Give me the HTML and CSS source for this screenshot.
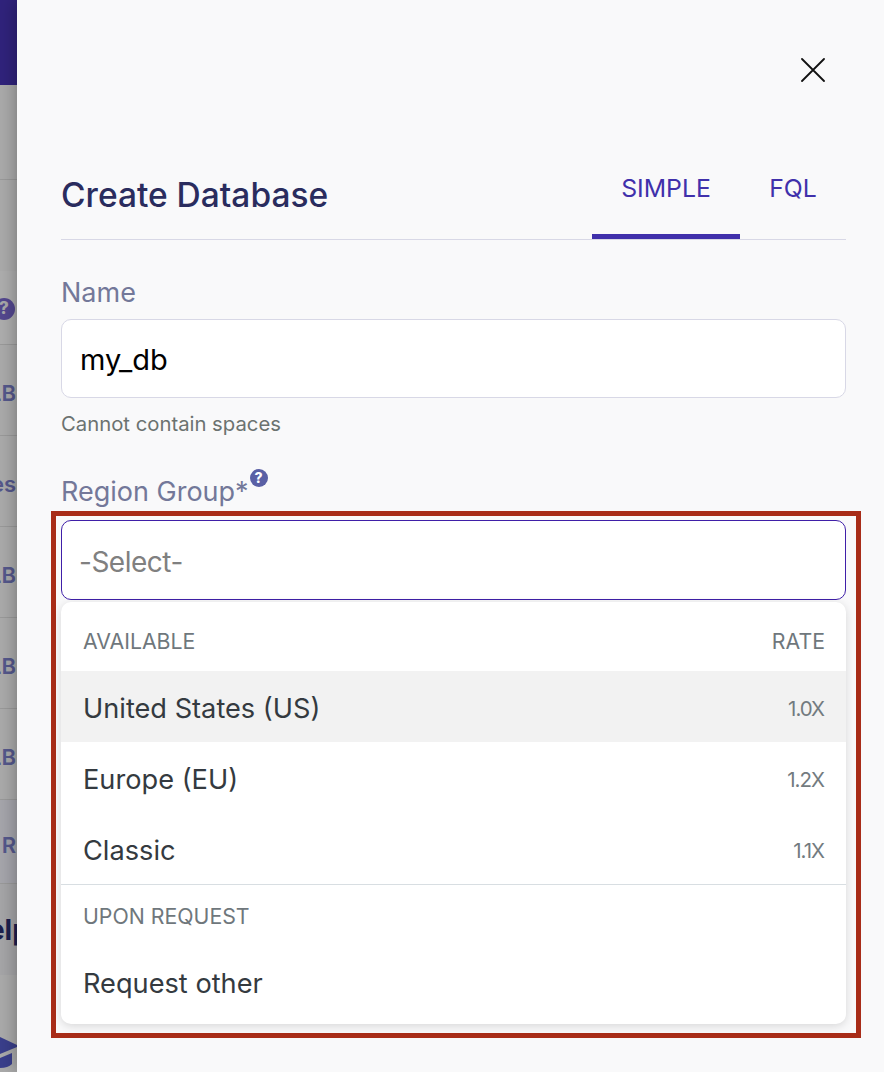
FILE: index.html
```html
<!DOCTYPE html>
<html lang="en">
<head>
    <meta charset="UTF-8">
    <meta name="viewport" content="width=device-width, initial-scale=1.0">
    <title>Create Database</title>
    <link rel="stylesheet" href="styles.css">
</head>
<body>
    <div class="page">
        <!-- what is left visible of the page behind the drawer -->
        <div class="behind">
            <div class="behind-top"></div>
            <div class="behind-row h95"></div>
            <div class="behind-row h91 no-line"></div>
            <div class="behind-row h74 lighter"><span class="help-icon big">?</span></div>
            <div class="behind-row h91"><span>LB</span></div>
            <div class="behind-row h91"><span>es</span></div>
            <div class="behind-row h91"><span>LB</span></div>
            <div class="behind-row h91"><span>LB</span></div>
            <div class="behind-row h91"><span>LB</span></div>
            <div class="behind-row h84 bluish"><span>R</span></div>
            <div class="behind-row h91 no-line help-row"><span>Help</span></div>
            <div class="behind-cap">
                <svg width="17" height="31" viewBox="0 0 17 31">
                    <path d="M0 0 L17 8 L17 10 L0 17 Z" fill="#3a3f8c"/>
                    <path d="M0 21 L12 16 L12 27 Q8 31 0 31 Z" fill="#3a3f8c"/>
                </svg>
            </div>
        </div>

        <div class="drawer">
            <button class="close" aria-label="Close">
                <svg width="24" height="24" viewBox="0 0 24 24">
                    <path d="M1 1 L23 23 M23 1 L1 23" stroke="#111" stroke-width="1.8" stroke-linecap="round"/>
                </svg>
            </button>

            <div class="header">
                <h1>Create Database</h1>
                <div class="tabs">
                    <div class="tab active">SIMPLE</div>
                    <div class="tab">FQL</div>
                </div>
            </div>

            <label class="label name-label">Name</label>
            <div class="input">my_db</div>
            <p class="hint">Cannot contain spaces</p>

            <label class="label region-label"><span>Region Group*</span><span class="help-icon">?</span></label>

            <div class="highlight">
                <div class="select">-Select-</div>
                <div class="dropdown">
                    <div class="group-head first"><span>AVAILABLE</span><span>RATE</span></div>
                    <div class="option region hover"><span>United States (US)</span><span class="rate">1.0X</span></div>
                    <div class="option region"><span>Europe (EU)</span><span class="rate">1.2X</span></div>
                    <div class="option region"><span>Classic</span><span class="rate">1.1X</span></div>
                    <div class="group-head second"><span>UPON REQUEST</span></div>
                    <div class="option"><span>Request other</span></div>
                </div>
            </div>
        </div>
    </div>
</body>
</html>
```

FILE: styles.css
```css
* {
    box-sizing: border-box;
}

html, body {
    margin: 0;
    padding: 0;
    height: 1072px;
    overflow: hidden;
}

body {
    font-family: Inter, "Liberation Sans", sans-serif;
    background-color: #f9f9fa;
}

.page {
    display: flex;
    height: 1072px;
}

/* page behind the drawer */
.behind {
    width: 17px;
    flex-shrink: 0;
    overflow: hidden;
    background-color: #ababab;
    color: #55588c;
    font-size: 22px;
    font-weight: 600;
}

.behind-top {
    height: 85px;
    background-color: #30237c;
}

.behind-row {
    display: flex;
    align-items: center;
    justify-content: flex-end;
    padding: 6px 1px 0 0;
    border-bottom: 1px solid #9a9a9a;
    white-space: nowrap;
}

.behind-row.no-line {
    border-bottom: none;
}

.h95 { height: 95px; }
.h91 { height: 91px; }
.h84 { height: 84px; }
.h74 { height: 74px; }

.lighter {
    padding-top: 2px;
    background-color: #aeaeae;
}

.bluish {
    background-color: #a6a6ac;
}

.help-row {
    justify-content: flex-start;
    padding: 0;
    margin-left: -33px;
    width: 60px;
    background-color: #a6a6a8;
    color: #1d1f4e;
    font-size: 28px;
    font-weight: 700;
}

.behind-cap {
    display: flex;
    padding-top: 62px;
}

.drawer {
    flex: 1;
    min-width: 0;
    display: flex;
    flex-direction: column;
    padding: 58px 38px 0 44px;
    background-color: #f9f9fa;
    box-shadow: 0 0 18px rgba(0, 0, 0, 0.35);
    position: relative;
}

.close {
    align-self: flex-end;
    width: 24px;
    height: 24px;
    margin-right: 21px;
    padding: 0;
    border: none;
    background: none;
    line-height: 0;
}

.header {
    display: flex;
    justify-content: space-between;
    align-items: stretch;
    height: 159px;
    margin-top: -1px;
    padding-top: 60px;
    border-bottom: 1px solid #d8d8e6;
}

h1 {
    margin: 0;
    padding-top: 35px;
    font-size: 33.5px;
    font-weight: 500;
    line-height: 38px;
    color: #2a2c5e;
}

.tabs {
    display: flex;
}

.tab {
    width: 106px;
    padding-top: 31px;
    font-size: 24.8px;
    line-height: 32px;
    text-align: center;
    color: #4030ab;
}

.tab.active {
    width: 148px;
    height: 98px;
    border-bottom: 5px solid #4030ab;
}

.label {
    display: block;
    font-size: 27px;
    font-weight: 400;
    line-height: 32px;
    color: #737899;
}

.name-label {
    margin-top: 37px;
}

.input {
    height: 79px;
    margin-top: 10px;
    padding: 2px 18px 0;
    display: flex;
    align-items: center;
    border: 1px solid #d8d8e6;
    border-radius: 10px;
    background-color: #fff;
    font-size: 29px;
    color: #000;
}

.hint {
    margin: 13px 0 0 0;
    font-size: 20.3px;
    line-height: 26px;
    color: #6b7270;
}

.region-label {
    display: flex;
    height: 32px;
    margin-top: 39px;
}

.help-icon {
    display: inline-flex;
    align-items: center;
    justify-content: center;
    width: 18px;
    height: 18px;
    border-radius: 50%;
    background-color: #5a60a5;
    color: #fff;
    font-size: 14px;
    font-weight: 800;
    line-height: 1;
}

.region-label .help-icon {
    margin: -7px 0 0 1px;
}

.help-icon.big {
    flex-shrink: 0;
    width: 22px;
    height: 22px;
    margin-right: 1px;
    background-color: #54488f;
    color: #a9a9a9;
    font-size: 17px;
}

/* red annotation box round the select */
.highlight {
    margin: 3px -15px 0 -10px;
    padding: 4px 10px 9px 5px;
    border: 5px solid #a82c18;
}

.select {
    height: 80px;
    padding: 4px 17px 0;
    display: flex;
    align-items: center;
    border: 1px solid #3f1fa8;
    border-radius: 10px;
    background-color: #fff;
    font-size: 28px;
    letter-spacing: -0.5px;
    color: #808080;
}

.dropdown {
    height: 422px;
    margin-top: 2px;
    border-radius: 10px;
    background-color: #fff;
    box-shadow: 0 2px 10px rgba(0, 0, 0, 0.14);
    overflow: hidden;
}

.group-head {
    display: flex;
    justify-content: space-between;
    align-items: center;
    padding: 0 21px 0 22px;
    font-size: 21.3px;
    color: #6f777c;
}

.group-head.first {
    height: 69px;
    padding-top: 8px;
}

.group-head.second {
    height: 64px;
    padding-bottom: 2px;
    border-top: 1px solid #d8dee2;
}

.option {
    display: flex;
    justify-content: space-between;
    align-items: center;
    height: 71px;
    padding: 0 22px;
    font-size: 27.2px;
    color: #343a40;
}

.option.region {
    padding-top: 4px;
}

.option.hover {
    background-color: #f2f2f2;
}

.rate {
    font-size: 20.5px;
    letter-spacing: -1px;
    color: #737b80;
}
```
